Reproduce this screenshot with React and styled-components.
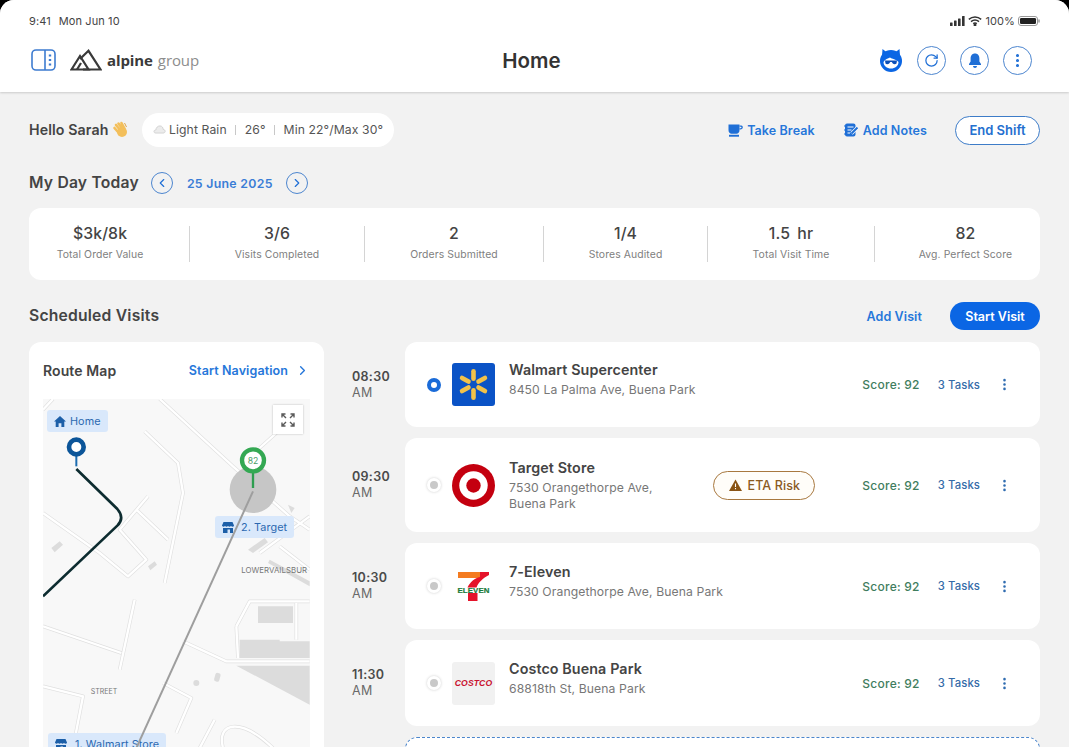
import React from "react";
import styled, { createGlobalStyle } from "styled-components";
import { ChevronLeft, ChevronRight, RotateCw, MoreVertical } from "lucide-react";

const Global = createGlobalStyle`
  html, body { margin: 0; padding: 0; background: #000; }
  body { font-family: Inter, "Liberation Sans", sans-serif; }
  * { box-sizing: border-box; }
`;

const Page = styled.div`
  width: 1069px; height: 747px; overflow: hidden;
  background: #f2f2f2; border-radius: 14px 14px 0 0;
  color: #3b3b3b; letter-spacing: 0.1px;
`;
const Header = styled.header`
  height: 92px; background: #fff; padding: 14px 29px 0 29px;
  box-shadow: 0 1px 2px rgba(0,0,0,.16);
`;
const StatusBar = styled.div`
  display: flex; justify-content: space-between; align-items: center;
  height: 14px; font-size: 11px; color: #444;
`;
const StatusGroup = styled.div`
  display: flex; align-items: center; gap: ${p => p.$gap || 8}px;
`;
const NavRow = styled.div`
  position: relative; display: flex; justify-content: space-between; align-items: center;
  height: 32px; margin-top: 16px; padding: 0 8px 0 2px;
`;
const Brand = styled.div`
  display: flex; align-items: center; gap: 14px;
`;
const Logo = styled.div`
  display: flex; align-items: center; gap: 5px;
`;
const LogoText = styled.span`
  font-family: "Open Sans", sans-serif; font-size: 15px; letter-spacing: -0.1px;
  font-weight: ${p => p.$light ? 400 : 700};
  color: ${p => p.$light ? "#8d8d8d" : "#3a3a3a"};
`;
const Title = styled.h1`
  position: absolute; left: 0; right: 6px; margin: 0; text-align: center;
  font-size: 20.5px; font-weight: 600; color: #333; pointer-events: none; letter-spacing: 0;
`;
const NavActions = styled.div`
  display: flex; align-items: center; gap: 14px;
`;
const RoundButton = styled.button`
  width: ${p => p.$size || 29}px; height: ${p => p.$size || 29}px; padding: 0;
  margin-left: ${p => p.$ml || 0}px;
  border-radius: 50%; background: ${p => p.$bg || "#fff"};
  border: 1px solid #4d86cf; color: #1f6fd6;
  display: flex; align-items: center; justify-content: center;
`;
const Main = styled.main`
  padding: 21px 29px 0;
`;
const TopRow = styled.div`
  display: flex; align-items: center; height: 34px;
`;
const Hello = styled.div`
  display: flex; align-items: center; gap: 4px; width: 113px; flex: none; padding-bottom: 1px;
  font-size: 14.2px; font-weight: 600; color: #444;
`;
const WeatherPill = styled.div`
  display: flex; align-items: center; height: 34px; width: 252px; padding: 0 11px 1px 11px;
  background: #fff; border-radius: 17px; font-size: 12.2px; color: #555; white-space: nowrap;
`;
const Pipe = styled.span`
  flex: none; width: 1px; height: 10px; background: #c8c8c8; margin: 0 8.5px;
`;
const TopActions = styled.div`
  display: flex; align-items: center; margin-left: auto;
`;
const TextAction = styled.a`
  display: flex; align-items: center; gap: 4px; font-size: 12.5px; font-weight: 600;
  color: #2677da; margin-right: ${p => p.$mr || 0}px;
`;
const OutlineButton = styled.button`
  width: 85px; height: 29px; border-radius: 15px; background: #fff;
  border: 1px solid #3d7cc8; color: #2470cf;
  font: 600 13px Inter, sans-serif; padding: 0;
`;
const DayRow = styled.div`
  display: flex; align-items: center; height: 24px; margin-top: 24px;
`;
const SectionTitle = styled.h2`
  margin: 0; font-size: 15.7px; font-weight: 600; color: #444; letter-spacing: 0.2px; padding-bottom: 1px;
`;
const DateText = styled.span`
  font-size: 12.3px; font-weight: 600; color: #3a7dd6; margin: 0 13px 0 14px; letter-spacing: .3px;
`;
const StatsCard = styled.section`
  display: grid; grid-template-columns: 160fr 175fr 179fr 164fr 167fr 166fr;
  align-items: center; height: 72px; margin-top: 13px;
  background: #fff; border-radius: 12px;
`;
const Stat = styled.div`
  display: flex; flex-direction: column; align-items: center; justify-content: center; gap: 6px;
  height: 36px; padding-bottom: 2px; border-left: 1px solid #d4d4d4;
  &:first-child { border-left: 0; padding-right: 18px; }
  &:last-child { padding-left: 16px; }
`;
const StatValue = styled.div`
  font-size: 15.8px; font-weight: 500; color: #444; line-height: 18px; word-spacing: 3px;
`;
const StatLabel = styled.div`
  font-size: 10.4px; color: #808080; line-height: 12px;
`;
const SectionRow = styled.div`
  display: flex; align-items: center; justify-content: space-between; height: 28px; margin-top: 22px;
`;
const SectionActions = styled.div`
  display: flex; align-items: center; gap: 28px;
`;
const PrimaryButton = styled.button`
  width: 90px; height: 28px; border-radius: 14px; border: 0; background: #0b66e4; color: #fff;
  font: 600 12.5px Inter, sans-serif; padding: 0;
`;
const PlainLink = styled.a`
  font-size: 12.5px; font-weight: 600; color: #2677da;
`;
const Content = styled.div`
  display: flex; align-items: flex-start; gap: 28px; margin-top: 12px;
`;
const RouteCard = styled.aside`
  flex: 0 0 295px; height: 500px; background: #fff; border-radius: 12px; padding: 0 14px;
`;
const RouteHead = styled.div`
  display: flex; justify-content: space-between; align-items: center; height: 57px; padding-bottom: 1px;
`;
const RouteTitle = styled.div`
  font-size: 14px; font-weight: 600; color: #444;
`;
const NavLink = styled.a`
  display: flex; align-items: center; gap: 7px;
  font-size: 12.5px; font-weight: 600; color: #2677da;
`;
const MapBox = styled.div`
  position: relative; width: 267px; height: 440px; overflow: hidden; background: #f8f8f8;
`;
const MapLabel = styled.div`
  position: absolute; left: ${p => p.$x}px; top: ${p => p.$y}px;
  height: 22px; padding: 0 7px; display: flex; align-items: center; gap: ${p => p.$gap || 4}px;
  background: #d9e8fb; border-radius: 3px; font-size: 10.8px; color: #2c68b0; white-space: nowrap;
`;
const ExpandButton = styled.button`
  position: absolute; left: 230px; top: 6px; width: 30px; height: 29px; padding: 0;
  background: #fff; border: 0; box-shadow: 0 0 2px rgba(0,0,0,.25);
  display: flex; align-items: center; justify-content: center;
`;
const MapOverlay = styled.svg`
  position: absolute; left: 0; top: 0; display: block; pointer-events: none;
`;
const Visits = styled.div`
  flex: 1; display: flex; flex-direction: column; gap: 11px;
`;
const VisitRow = styled.div`
  display: grid; grid-template-columns: 53px 1fr; align-items: center;
`;
const Time = styled.div`
  font-size: 12.5px; font-weight: 600; color: #4a4a4a; line-height: 16px; letter-spacing: .3px;
  span { display: block; font-weight: 400; color: #6a6a6a; }
`;
const VisitCard = styled.div`
  display: flex; align-items: center; height: ${p => p.$h}px; padding: 0 28px 0 19px;
  background: #fff; border-radius: 12px;
`;
const DotSlot = styled.div`
  width: 20px; margin-right: 8px; display: flex; justify-content: center;
`;
const Dot = styled.div`
  width: 14px; height: 14px; border-radius: 50%;
  ${p => p.$active
    ? "border: 4px solid #1a6bd8; background: #fff;"
    : "background: #c9c9c9; border: 3.5px solid #fff; box-shadow: 0 0 3px rgba(0,0,0,.2);"}
`;
const Brandmark = styled.div`
  width: 43px; height: 43px; flex: none; margin-right: 14px; border-radius: 3px;
  background: ${p => p.$bg || "transparent"};
  display: flex; align-items: center; justify-content: center;
`;
const CostcoText = styled.span`
  font: italic 900 8.6px "Liberation Sans", sans-serif; color: #c9122f; letter-spacing: .1px;
`;
const VisitInfo = styled.div`
  flex: 1; min-height: 47px;
`;
const VisitName = styled.div`
  font-size: 14.3px; font-weight: 600; color: #444; line-height: 18px;
`;
const VisitAddress = styled.div`
  max-width: ${p => p.$max || 300}px; font-size: 12.2px; color: #777; line-height: 15.5px; margin-top: 3px;
`;
const RiskPill = styled.div`
  display: flex; align-items: center; justify-content: center; gap: 6px;
  width: 102px; height: 29px; margin-right: 47px; border-radius: 15px;
  border: 1px solid #a8783f; background: #fffdf9; color: #8a5a1f; font-size: 12.5px; font-weight: 500;
`;
const Score = styled.div`
  font-size: 12px; font-weight: 500; color: #3f7d5e; margin-right: 18px; letter-spacing: .25px;
`;
const Tasks = styled.div`
  font-size: 11.3px; font-weight: 500; color: #356ba8; margin-right: 16px;
`;
const KebabSlot = styled.div`
  color: #2e6bb0; display: flex; width: 16px; justify-content: center;
`;
const DashedCard = styled.div`
  height: 80px; margin-left: 53px; background: #fff; border: 1px dashed #4c86cc; border-radius: 12px;
`;

const SidebarIcon = () => (
  <svg width="25" height="22" viewBox="0 0 25 22" fill="none" stroke="#3d7bd0" strokeWidth="1.6">
    <rect x="1" y="1" width="23" height="20" rx="4" />
    <path d="M14 1v20" />
    <path d="M17.8 6.5h2.4M17.8 11h2.4M17.8 15.5h2.4" strokeWidth="1.8" />
  </svg>
);
const MountainIcon = () => (
  <svg width="32" height="22" viewBox="0 0 32 22" fill="none" stroke="#3a3a3a" strokeWidth="2.2" strokeLinejoin="miter">
    <path d="M1.5 20.5 L10 7 L18.5 20.5 Z" />
    <path d="M10 10 L18.5 1.8 L30.5 20.5 H13" />
    <path d="M7 20.5 L11 14" />
  </svg>
);
const BotIcon = () => (
  <svg width="24" height="24" viewBox="0 0 24 24">
    <path d="M3.5 1 L8 4.5 H16 L20.5 1 L21 8 H3 Z" fill="#0b66e4" />
    <circle cx="12" cy="13" r="11" fill="#0b66e4" />
    <path d="M4.5 14 C6 11 9 10.5 11 9.5 C13 11 17 11 19.5 14 C19.5 18 16 20.5 12 20.5 C8 20.5 4.5 18 4.5 14 Z" fill="#fff" />
    <path d="M6 12.6 H18 L17.5 15.5 C16.5 16.6 14.8 16.5 13.8 15.6 L12.8 14 H11.2 L10.2 15.6 C9.2 16.5 7 16.6 6.5 15.5 Z" fill="#0b4fb8" />
  </svg>
);
const BellIcon = () => (
  <svg width="16" height="17" viewBox="0 0 16 17" fill="#1f6fd6">
    <path d="M8 1.5 C5 1.5 3.6 3.8 3.6 6.6 V9.5 L2 12 V13 H14 V12 L12.4 9.5 V6.6 C12.4 3.8 11 1.5 8 1.5 Z" />
    <path d="M6 14 H10 C10 15.3 9 16 8 16 C7 16 6 15.3 6 14 Z" />
  </svg>
);
const CupIcon = () => (
  <svg width="15" height="13" viewBox="0 0 15 13" fill="#1f6fd6">
    <path d="M0.5 0.5 H11.5 V6 C11.5 8.5 10 9.8 8.5 9.8 H3.5 C2 9.8 0.5 8.5 0.5 6 Z" />
    <path d="M11.5 1.5 H13.3 C14.4 1.5 14.8 2.4 14.8 3.3 C14.8 4.6 13.8 5.4 12.5 5.4 H11.5 V4.2 H12.5 C13.1 4.2 13.5 3.9 13.5 3.3 C13.5 2.9 13.2 2.7 12.9 2.7 H11.5 Z" />
    <rect x="1" y="10.8" width="10" height="1.9" />
  </svg>
);
const NotesIcon = () => (
  <svg width="15" height="14" viewBox="0 0 15 14" fill="none">
    <rect x="1" y="0.5" width="10.5" height="13" rx="2" fill="#1f6fd6" />
    <path d="M0 3 H3 M0 7 H3 M0 11 H3" stroke="#1f6fd6" strokeWidth="1.2" />
    <path d="M3.5 4 H9.5 M3.5 7 H7.5 M3.5 10 H6" stroke="#fff" strokeWidth="1.2" />
    <path d="M7.5 10.5 L13.5 4.5" stroke="#fff" strokeWidth="3.4" />
    <path d="M7.5 10.5 L13.5 4.5" stroke="#1f6fd6" strokeWidth="2" />
  </svg>
);
const WaveIcon = () => (
  <svg width="17" height="17" viewBox="0 0 17 17">
    <g stroke="#f3bf5b" strokeWidth="2.6" strokeLinecap="round">
      <path d="M4 4 L8.5 9.5 M6.5 2.5 L11 8.5 M9.5 2 L12.5 7.5 M2.5 7 L6 11" />
    </g>
    <ellipse cx="10" cy="11" rx="5" ry="5" fill="#f3bf5b" />
    <path d="M12.5 2 L14.5 6" stroke="#e0a546" strokeWidth="1" />
  </svg>
);
const CloudIcon = () => (
  <svg width="13" height="9" viewBox="0 0 14 10" style={{ marginRight: 3, flex: "none" }}>
    <path d="M3 9 C1 9 .5 7.5 1 6.5 C1.5 5.5 2.5 5.5 3 5.5 C3 3 5 1 7.5 1 C10 1 11 3 11 4.8 C12.5 5 13.5 6 13.3 7.3 C13 8.5 12 9 11 9 Z" fill="#ececec" stroke="#c8c8c8" strokeWidth=".8" />
  </svg>
);
const HouseIcon = () => (
  <svg width="12" height="11" viewBox="0 0 12 11" fill="#1c5fa8">
    <path d="M6 0 L12 5.5 H10.3 V11 H7.4 V7.2 H4.6 V11 H1.7 V5.5 H0 Z" />
  </svg>
);
const StoreIcon = () => (
  <svg width="12" height="11" viewBox="0 0 12 11" fill="#1c5fa8">
    <path d="M1.5 0 H10.5 L12 3.5 C12 5 9.8 5 9 4 C8 5 7 5 6 4 C5 5 4 5 3 4 C2.2 5 0 5 0 3.5 Z" />
    <path d="M1 6 H11 V11 H8 V7.5 H5.5 V11 H1 Z" />
  </svg>
);
const ExpandIcon = () => (
  <svg width="14" height="14" viewBox="0 0 14 14" fill="none" stroke="#5a5a5a" strokeWidth="1.4">
    <path d="M1 4.5 V1 H4.5 M1 1 L5 5 M13 4.5 V1 H9.5 M13 1 L9 5 M1 9.5 V13 H4.5 M1 13 L5 9 M13 9.5 V13 H9.5 M13 13 L9 9" />
  </svg>
);
const WarnIcon = () => (
  <svg width="13" height="12" viewBox="0 0 13 12">
    <path d="M6.5 .5 L13 12 H0 Z" fill="#8a5414" />
    <path d="M6.5 4.5 V8 M6.5 9 V10.3" stroke="#fff" strokeWidth="1.1" />
  </svg>
);
const StatusIcons = () => (
  <>
    <svg width="15" height="10" viewBox="0 0 15 10" fill="#333">
      <rect x="0" y="6.5" width="2.6" height="3.5" rx=".5" />
      <rect x="4" y="4.5" width="2.6" height="5.5" rx=".5" />
      <rect x="8" y="2.5" width="2.6" height="7.5" rx=".5" />
      <rect x="12" y="0" width="2.6" height="10" rx=".5" />
    </svg>
    <svg width="14" height="10" viewBox="0 0 14 10" fill="none" stroke="#333" strokeWidth="1.5">
      <path d="M.8 3.4 C4.5 .2 9.5 .2 13.2 3.4" />
      <path d="M3 5.6 C5.4 3.6 8.6 3.6 11 5.6" />
      <path d="M5.2 7.7 C6.3 6.9 7.7 6.9 8.8 7.7" />
      <circle cx="7" cy="9" r=".7" fill="#333" />
    </svg>
  </>
);
const Battery = () => (
  <svg width="22" height="10" viewBox="0 0 22 10">
    <rect x=".5" y=".5" width="19" height="9" rx="2.5" fill="none" stroke="#999" />
    <rect x="2" y="2" width="16" height="6" rx="1.2" fill="#222" />
    <rect x="20.3" y="3.3" width="1.4" height="3.4" rx=".7" fill="#999" />
  </svg>
);

const WalmartLogo = () => (
  <svg width="43" height="43" viewBox="0 0 43 43">
    {[0, 60, 120, 180, 240, 300].map(a => (
      <rect key={a} x="19.2" y="6" width="4.6" height="12" rx="2.3" fill="#f2c24a" transform={`rotate(${a} 21.5 21.5)`} />
    ))}
  </svg>
);
const TargetLogo = () => (
  <svg width="43" height="43" viewBox="0 0 43 43">
    <circle cx="21.5" cy="21.5" r="21.5" fill="#c4000f" />
    <circle cx="21.5" cy="21.5" r="14.2" fill="#fff" />
    <circle cx="21.5" cy="21.5" r="7.2" fill="#c4000f" />
  </svg>
);
const SevenLogo = () => (
  <svg width="33" height="31" viewBox="0 0 33 31">
    <rect x="1" y="1" width="22" height="6" fill="#f47b20" />
    <path d="M23 1 H32 V4 C26 7 21 12 19.5 16.5 H10.5 C13 11 18 7 23 6 Z" fill="#e5132a" />
    <rect x="11" y="22" width="9.5" height="8" fill="#e5132a" />
    <text x="16.5" y="21.5" textAnchor="middle" textLength="32" lengthAdjust="spacingAndGlyphs" fontFamily="Liberation Sans, sans-serif" fontWeight="700" fontSize="7" fill="#1a7a3a" stroke="#1a7a3a" strokeWidth=".2">ELEVEN</text>
  </svg>
);

const ROADS = "M420 178 L640 380 L810 530 L870 570 M100 178 L70 210 M375 275 L475 370 L490 460 L435 730 M70 520 L240 640 L325 710 L380 660 L300 570 L385 470 M350 510 L445 600 M345 780 L300 990 M70 860 L305 940 M490 905 L620 965 H870 M650 860 L690 785 H870 M650 860 L655 955 M830 790 V900 M70 1040 L190 1070 L160 1225 M430 1030 L515 1075 L470 1180 M720 325 L770 280 M720 640 L870 530 M780 620 L870 690 M540 1225 L585 1140 M610 1225 C590 1150 660 1130 760 1225";

const RouteMapArt = () => (
  <svg width="267" height="349" viewBox="70 178 801 1047" style={{ display: "block" }}>
    <g fill="#dcdcdc">
      <path d="M715 800 H820 V850 H780 V900 H660 V955 H870 V905 H780 V850 H715 Z" />
      <path d="M650 978 H870 V1095 Z" />
      <path d="M95 625 L120 605 L130 615 L105 638 Z M385 680 L405 665 L412 675 L392 692 Z M685 630 L735 595 L745 608 L700 640 Z M750 660 L870 725 V740 L745 670 Z M805 495 L825 505 L815 520 Z" />
      <circle cx="530" cy="1030" r="9" />
      <rect x="585" y="1000" width="16" height="26" rx="6" transform="rotate(15 593 1013)" />
    </g>
    <path d={ROADS} fill="none" stroke="#e0e0e0" strokeWidth="11" strokeLinejoin="round" />
    <path d={ROADS} fill="none" stroke="#fff" strokeWidth="7" strokeLinejoin="round" />
    <text x="665" y="699" fontSize="23.5" fill="#777" fontFamily="Inter, sans-serif">LOWERVAILSBUR</text>
    <text x="213" y="1063" fontSize="21" fill="#777" fontFamily="Inter, sans-serif">STREET</text>
    <circle cx="700" cy="450" r="70" fill="#c6c6c6" />
    <path d="M170 388 L293 508 Q316 535 293 558 L70 770" fill="none" stroke="#0d2c30" strokeWidth="8" />
    <path d="M170 345 V380" stroke="#1c6cb0" strokeWidth="6" />
    <circle cx="170" cy="322" r="22" fill="#fff" stroke="#0c5599" strokeWidth="14" />
    <path d="M700 395 V445" stroke="#2e9e50" strokeWidth="7" />
    <circle cx="700" cy="362" r="33" fill="#fff" stroke="#34a853" strokeWidth="13" />
    <text x="700" y="372" textAnchor="middle" fontSize="26" fill="#4a9d68" fontFamily="Inter, sans-serif">82</text>
  </svg>
);

const stats = [
  ["$3k/8k", "Total Order Value"],
  ["3/6", "Visits Completed"],
  ["2", "Orders Submitted"],
  ["1/4", "Stores Audited"],
  ["1.5 hr", "Total Visit Time"],
  ["82", "Avg. Perfect Score"],
];

const visits = [
  { time: "08:30", name: "Walmart Supercenter", addr: "8450 La Palma Ave, Buena Park", h: 85, active: true, bg: "#0b53c6", logo: <WalmartLogo /> },
  { time: "09:30", name: "Target Store", addr: "7530 Orangethorpe Ave, Buena Park", h: 94, max: 175, risk: true, logo: <TargetLogo /> },
  { time: "10:30", name: "7-Eleven", addr: "7530 Orangethorpe Ave, Buena Park", h: 86, logo: <SevenLogo /> },
  { time: "11:30", name: "Costco Buena Park", addr: "68818th St, Buena Park", h: 86, bg: "#f1f1f1", logo: <CostcoText>COSTCO</CostcoText> },
];

export default function App() {
  return (
    <Page>
      <Global />
      <Header>
        <StatusBar>
          <StatusGroup><span>9:41</span><span>Mon Jun 10</span></StatusGroup>
          <StatusGroup $gap={3}><StatusIcons /><span>100%</span><Battery /></StatusGroup>
        </StatusBar>
        <NavRow>
          <Brand>
            <SidebarIcon />
            <Logo>
              <MountainIcon />
              <LogoText>alpine</LogoText>
              <LogoText $light>group</LogoText>
            </Logo>
          </Brand>
          <Title>Home</Title>
          <NavActions>
            <BotIcon />
            <RoundButton><RotateCw size={15} strokeWidth={2} /></RoundButton>
            <RoundButton><BellIcon /></RoundButton>
            <RoundButton><MoreVertical size={17} strokeWidth={2.4} /></RoundButton>
          </NavActions>
        </NavRow>
      </Header>
      <Main>
        <TopRow>
          <Hello>Hello Sarah <WaveIcon /></Hello>
          <WeatherPill>
            <CloudIcon />Light Rain<Pipe />26°<Pipe />Min 22°/Max 30°
          </WeatherPill>
          <TopActions>
            <TextAction $mr={29}><CupIcon />Take Break</TextAction>
            <TextAction $mr={28}><NotesIcon />Add Notes</TextAction>
            <OutlineButton>End Shift</OutlineButton>
          </TopActions>
        </TopRow>
        <DayRow>
          <SectionTitle>My Day Today</SectionTitle>
          <RoundButton $size={22} $bg="transparent" $ml={12}><ChevronLeft size={14} /></RoundButton>
          <DateText>25 June 2025</DateText>
          <RoundButton $size={22} $bg="transparent"><ChevronRight size={14} /></RoundButton>
        </DayRow>
        <StatsCard>
          {stats.map(([v, l]) => (
            <Stat key={l}>
              <StatValue>{v}</StatValue>
              <StatLabel>{l}</StatLabel>
            </Stat>
          ))}
        </StatsCard>
        <SectionRow>
          <SectionTitle>Scheduled Visits</SectionTitle>
          <SectionActions>
            <PlainLink>Add Visit</PlainLink>
            <PrimaryButton>Start Visit</PrimaryButton>
          </SectionActions>
        </SectionRow>
        <Content>
          <RouteCard>
            <RouteHead>
              <RouteTitle>Route Map</RouteTitle>
              <NavLink>Start Navigation <ChevronRight size={15} strokeWidth={2.2} /></NavLink>
            </RouteHead>
            <MapBox>
              <RouteMapArt />
              <MapLabel $x={4} $y={11}><HouseIcon />Home</MapLabel>
              <MapLabel $x={172} $y={117} $gap={7}><StoreIcon />2. Target</MapLabel>
              <MapLabel $x={5} $y={334} $gap={8}><StoreIcon />1. Walmart Store</MapLabel>
              <ExpandButton><ExpandIcon /></ExpandButton>
              <MapOverlay width="267" height="349" viewBox="70 178 801 1047">
                <path d="M700 455 L350 1225" fill="none" stroke="#9e9e9e" strokeWidth="6" />
              </MapOverlay>
            </MapBox>
          </RouteCard>
          <Visits>
            {visits.map(v => (
              <VisitRow key={v.time}>
                <Time>{v.time}<span>AM</span></Time>
                <VisitCard $h={v.h}>
                  <DotSlot><Dot $active={v.active} /></DotSlot>
                  <Brandmark $bg={v.bg}>{v.logo}</Brandmark>
                  <VisitInfo>
                    <VisitName>{v.name}</VisitName>
                    <VisitAddress $max={v.max}>{v.addr}</VisitAddress>
                  </VisitInfo>
                  {v.risk && <RiskPill><WarnIcon />ETA Risk</RiskPill>}
                  <Score>Score: 92</Score>
                  <Tasks>3 Tasks</Tasks>
                  <KebabSlot><MoreVertical size={15} strokeWidth={2.2} /></KebabSlot>
                </VisitCard>
              </VisitRow>
            ))}
            <DashedCard />
          </Visits>
        </Content>
      </Main>
    </Page>
  );
}
